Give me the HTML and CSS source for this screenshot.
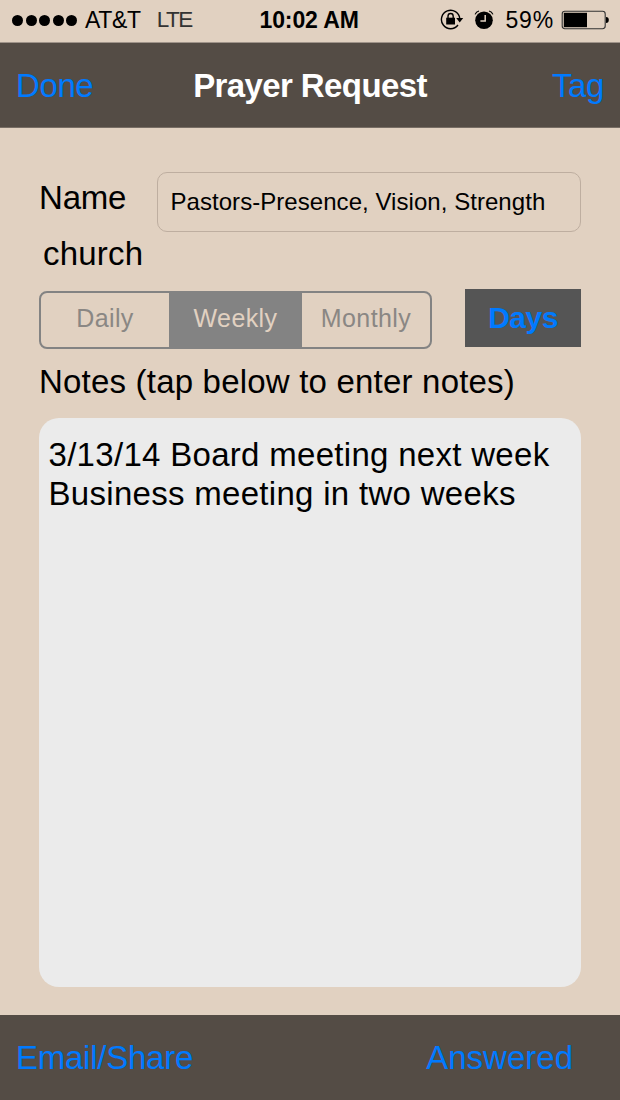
FILE: index.html
```html
<!DOCTYPE html>
<html lang="en">
<head>
    <meta charset="UTF-8">
    <meta name="viewport" content="width=device-width, initial-scale=1.0">
    <title>Prayer Request</title>
    <link rel="stylesheet" href="styles.css">
</head>
<body>
    <div class="status-bar">
        <div class="signal">
            <span class="dot"></span><span class="dot"></span><span class="dot"></span><span class="dot"></span><span class="dot"></span>
        </div>
        <span class="carrier">AT&amp;T</span>
        <span class="network">LTE</span>
        <span class="clock">10:02 AM</span>
        <svg class="lock-icon" width="24" height="22" viewBox="0 0 24 22">
            <path d="M19.8 9.6A9.2 9.2 0 1 0 18 16" fill="none" stroke="#000" stroke-width="1.4"/>
            <path d="M16.2 9h7l-3.5 4.4z"/>
            <rect x="6.2" y="8.7" width="8.8" height="6.8"/>
            <path d="M8 9.6V7.2a2.6 2.7 0 0 1 5.2 0V9.6" fill="none" stroke="#000" stroke-width="1.4"/>
        </svg>
        <svg class="alarm-icon" width="20" height="20" viewBox="0 0 20 20">
            <circle cx="10" cy="10.2" r="8.8"/>
            <path d="M1.1 4.4Q2.2 1.6 5 1M18.9 4.4Q17.8 1.6 15 1" fill="none" stroke="#000" stroke-width="1.2"/>
            <path d="M11.2 5v6H6.4" fill="none" stroke="#e1d1c1" stroke-width="1.5"/>
        </svg>
        <span class="percent">59%</span>
        <svg class="battery-icon" width="48" height="20" viewBox="0 0 48 20">
            <rect x="1.2" y="1.3" width="43" height="17.4" rx="2.6" fill="none" stroke="#333" stroke-width="1.1"/>
            <rect x="2.8" y="2.8" width="23.2" height="14.4"/>
            <path d="M45 7q2.8 0 2.8 3t-2.8 3z"/>
        </svg>
    </div>

    <div class="nav-bar">
        <a class="bar-link">Done</a>
        <h1 class="title">Prayer Request</h1>
        <a class="bar-link tag">Tag</a>
    </div>

    <div class="content">
        <div class="name-row">
            <label class="label">Name</label>
            <div class="name-field">Pastors-Presence, Vision, Strength</div>
        </div>
        <div class="label category">church</div>
        <div class="frequency-row">
            <div class="segments">
                <div class="segment daily">Daily</div>
                <div class="segment weekly">Weekly</div>
                <div class="segment monthly">Monthly</div>
            </div>
            <button class="days-button">Days</button>
        </div>
        <div class="label notes-label">Notes (tap below to enter notes)</div>
        <div class="notes">
            <div>3/13/14 Board meeting next week</div>
            <div>Business meeting in two weeks</div>
        </div>
    </div>

    <div class="toolbar">
        <a class="bar-link share">Email/Share</a>
        <a class="bar-link">Answered</a>
    </div>
</body>
</html>
```
FILE: styles.css
```css
* {
    box-sizing: border-box;
}
body {
    margin: 0;
    width: 620px;
    height: 1100px;
    display: flex;
    flex-direction: column;
    overflow: hidden;
    font-family: "Liberation Sans", Arial, sans-serif;
    font-size: 33px;
    color: #000;
    background: #e1d1c1;
    white-space: nowrap;
}
.status-bar {
    height: 43px;
    flex: none;
    display: flex;
    align-items: center;
    padding: 0 11px 2px 12px;
    border-bottom: 1px solid #a0948a;
    font-size: 23px;
}
.signal {
    display: flex;
    gap: 2.6px;
}
.dot {
    width: 11px;
    height: 11px;
    border-radius: 50%;
    background: #000;
}
.carrier {
    margin-left: 7.6px;
    width: 72px;
    letter-spacing: -0.3px;
}
.network {
    width: 103px;
    font-size: 22.5px;
    letter-spacing: -1.6px;
    color: #333;
}
.clock {
    width: 181px;
    font-weight: bold;
    letter-spacing: -0.1px;
}
.lock-icon {
    flex: none;
}
.alarm-icon {
    flex: none;
    margin-left: 10.5px;
}
.percent {
    margin-left: 11px;
    width: 55.5px;
    flex: none;
    letter-spacing: 0.8px;
}
.battery-icon {
    flex: none;
}
.nav-bar {
    height: 85px;
    flex: none;
    display: grid;
    grid-template-columns: 1fr auto 1fr;
    align-items: center;
    padding: 2px 16px 0;
    background: #544c45;
    border-bottom: 1px solid #786e65;
}
.title {
    margin: 0;
    font-size: 33px;
    letter-spacing: -0.6px;
    color: #fff;
}
.bar-link {
    color: #007aff;
}
.nav-bar .bar-link {
    letter-spacing: -0.4px;
}
.tag {
    text-align: right;
}
.content {
    height: 887px;
    flex: none;
    display: flex;
    flex-direction: column;
    padding: 44px 39px 28px;
}
.name-row {
    display: flex;
    justify-content: space-between;
    height: 60px;
}
.label {
    line-height: 38px;
}
.name-row .label {
    padding-top: 7px;
    letter-spacing: -0.2px;
}
.name-field {
    width: 424px;
    height: 60px;
    padding: 0 12.5px;
    border: 1px solid #beaea0;
    border-radius: 10px;
    font-size: 24px;
    letter-spacing: 0.05px;
    line-height: 58px;
}
.category {
    margin-top: 3px;
    padding-left: 4px;
    letter-spacing: 0.2px;
}
.frequency-row {
    display: flex;
    justify-content: space-between;
    margin-top: 16px;
    height: 60px;
}
.segments {
    display: flex;
    width: 393px;
    height: 58px;
    margin-top: 2px;
    border: 2px solid #838383;
    border-radius: 8px;
    overflow: hidden;
}
.segment {
    font-size: 25px;
    line-height: 50px;
    text-align: center;
    letter-spacing: 0.4px;
    color: #8a8784;
}
.daily {
    width: 128px;
}
.weekly {
    width: 133px;
    background: #838383;
    color: #e1d1c1;
}
.monthly {
    width: 128px;
}
.days-button {
    width: 116px;
    height: 58px;
    padding: 0;
    border: 0;
    background: #555;
    color: #007aff;
    font: bold 30px "Liberation Sans", Arial, sans-serif;
    letter-spacing: -0.5px;
}
.notes-label {
    margin-top: 14px;
    letter-spacing: 0.2px;
}
.notes {
    flex: 1;
    margin-top: 17px;
    padding: 17px 9.5px;
    border-radius: 20px;
    background: #ebebeb;
    line-height: 39px;
    letter-spacing: 0.3px;
}
.toolbar {
    height: 85px;
    flex: none;
    display: flex;
    justify-content: space-between;
    align-items: center;
    padding: 0 47px 0 16px;
    background: #544c45;
}
.share {
    letter-spacing: -0.25px;
}
```
